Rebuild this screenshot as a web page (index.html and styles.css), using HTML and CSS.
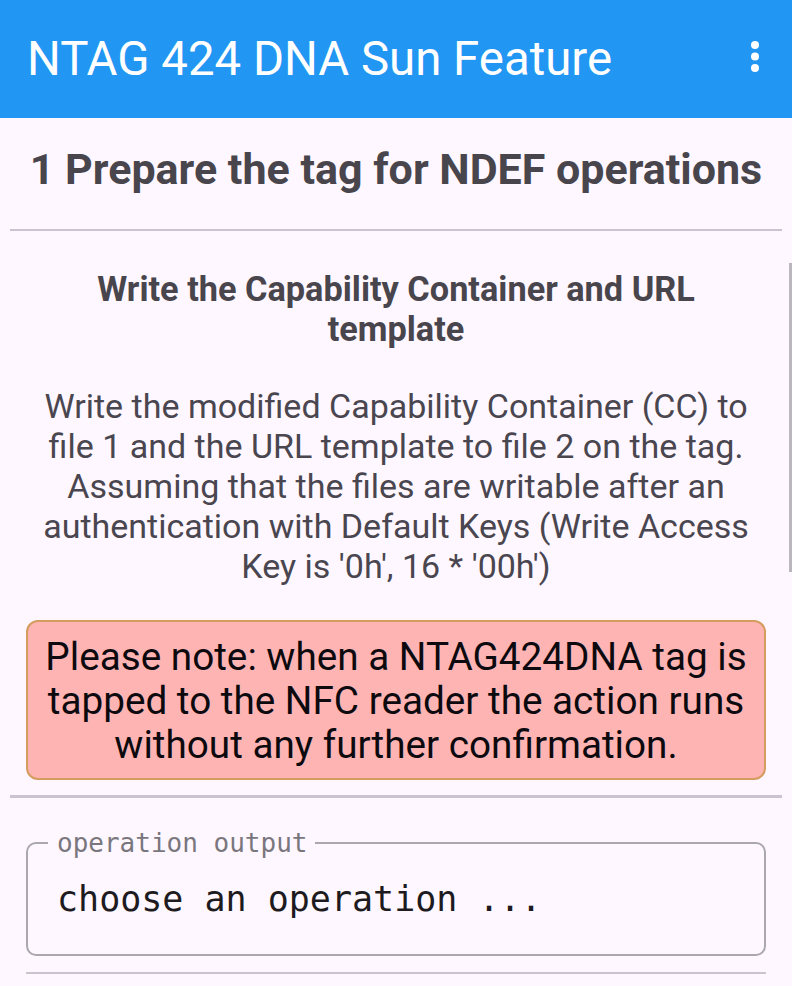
FILE: index.html
```html
<!DOCTYPE html>
<html lang="en">
<head>
<meta charset="utf-8">
<title>NTAG 424 DNA Sun Feature</title>
<link rel="stylesheet" href="styles.css">
</head>
<body>
<header class="appbar">
  <h1 class="appbar-title">NTAG 424 DNA Sun Feature</h1>
  <button class="overflow" aria-label="More options">
    <svg width="8" height="32" viewBox="0 0 8 32" aria-hidden="true">
      <circle cx="4" cy="4" r="4" fill="#fff"/>
      <circle cx="4" cy="15.5" r="4" fill="#fff"/>
      <circle cx="4" cy="27" r="4" fill="#fff"/>
    </svg>
  </button>
</header>
<main class="content">
  <h2 class="step-title">1 Prepare the tag for NDEF operations</h2>
  <div class="divider"></div>
  <section class="step">
    <h3 class="step-subtitle">Write the Capability Container and URL template</h3>
    <p class="step-text">Write the modified Capability Container (CC) to file 1 and the URL template to file 2 on the tag. Assuming that the files are writable after an authentication with Default Keys (Write Access Key is '0h', 16 * '00h')</p>
  </section>
  <div class="note">Please note: when a NTAG424DNA tag is tapped to the NFC reader the action runs without any further confirmation.</div>
  <div class="divider divider-second"></div>
  <fieldset class="output">
    <legend class="output-label">operation output</legend>
    <div class="output-text">choose an operation ...</div>
  </fieldset>
  <div class="divider divider-inset"></div>
</main>
<div class="scrollbar" aria-hidden="true"></div>
</body>
</html>
```
FILE: styles.css
```css
* { box-sizing: border-box; }
html, body { margin: 0; padding: 0; }
body {
  background: #fef7ff;
  font-family: Roboto, "Noto Sans", sans-serif;
  color: #49454f;
  width: 792px;
  min-height: 986px;
  overflow: hidden;
  position: relative;
}
.appbar {
  height: 118px;
  background: #2196f3;
  display: flex;
  align-items: center;
  padding-left: 27px;
}
.appbar-title {
  margin: 0;
  font-size: 47.4px;
  font-weight: 400;
  color: #fff;
  line-height: 56px;
  flex: 1;
  white-space: nowrap;
}
.overflow {
  border: 0;
  padding: 0;
  background: none;
  margin: -5px 33px 0 0;
  display: flex;
}
.step-title {
  margin: 0;
  padding: 26px 10px 35px;
  font-size: 43px;
  font-weight: 700;
  text-align: center;
  color: #48464c;
}
.divider {
  height: 2.4px;
  margin: 0 10px;
  background: #cac4d0;
}
.step {
  padding: 38px 38px 0;
  text-align: center;
}
.step-subtitle {
  margin: 0;
  font-size: 34.3px;
  font-weight: 700;
  color: #48464c;
}
.step-text {
  margin: 37px 0 0;
  font-size: 34px;
  line-height: 40px;
  color: #4a464f;
}
.note {
  margin: 34px 26px 0;
  padding: 13px 14px 11px;
  background: #ffb4b4;
  border: 2.4px solid #d49c5e;
  border-radius: 12px;
  font-size: 38.7px;
  line-height: 44px;
  text-align: center;
  color: #0c0a0e;
}
.divider-second { margin-top: 15px; }
.output {
  margin: 30px 26px 0;
  padding: 21px 20px 35px;
  border: 2.4px solid #aaa7ae;
  border-radius: 10px;
  min-width: 0;
}
.output-label {
  padding: 0 8px 0 9px;
  font-family: "DejaVu Sans Mono", "Liberation Mono", monospace;
  font-size: 26px;
  line-height: 30px;
  color: #7a767e;
}
.output-text {
  padding-left: 9px;
  font-family: "DejaVu Sans Mono", "Liberation Mono", monospace;
  font-size: 35px;
  color: #1d1b20;
  white-space: pre;
}
.divider-inset {
  margin: 16px 26px 0;
}
.scrollbar {
  position: absolute;
  right: 0;
  top: 263px;
  width: 3px;
  height: 309px;
  background: #b9b6bd;
}
```
